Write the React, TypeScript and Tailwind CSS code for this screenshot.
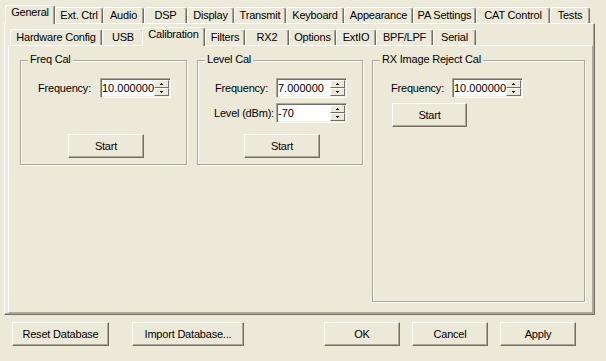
import React from 'react';

type TabDef = { label: string; cls: string; sel?: boolean };

const row1: TabDef[] = [
  { label: 'General', cls: 'w-[50px]', sel: true },
  { label: 'Ext. Ctrl', cls: 'w-[48px]' },
  { label: 'Audio', cls: 'w-[41px]' },
  { label: 'DSP', cls: 'w-[43px]' },
  { label: 'Display', cls: 'w-[47px]' },
  { label: 'Transmit', cls: 'w-[52px]' },
  { label: 'Keyboard', cls: 'w-[58px]' },
  { label: 'Appearance', cls: 'w-[69px]' },
  { label: 'PA Settings', cls: 'w-[63px]' },
  { label: 'CAT Control', cls: 'w-[74px]' },
  { label: 'Tests', cls: 'w-[40px]' },
];

const row2: TabDef[] = [
  { label: 'Hardware Config', cls: 'w-[92px]' },
  { label: 'USB', cls: 'w-[42px]' },
  { label: 'Calibration', cls: 'w-[63px]', sel: true },
  { label: 'Filters', cls: 'w-[40px]' },
  { label: 'RX2', cls: 'w-[44px]' },
  { label: 'Options', cls: 'w-[47px]' },
  { label: 'ExtIO', cls: 'w-[40px]' },
  { label: 'BPF/LPF', cls: 'w-[57px]' },
  { label: 'Serial', cls: 'w-[43px]' },
];

function Tab({ t }: { t: TabDef }) {
  if (t.sel) {
    return (
      <div
        className={`relative z-10 -ml-[2px] -mb-px flex h-[19px] shrink-0 justify-center whitespace-nowrap rounded-t-[3px] border-l border-r border-t border-l-white border-t-white border-r-[#716F64] bg-[#ECE9D8] shadow-[inset_-1px_0_0_#ACA899] ${t.cls}`}
      >
        {t.label}
      </div>
    );
  }
  return (
    <div
      className={`flex h-[16px] shrink-0 justify-center whitespace-nowrap rounded-t-[3px] border-l border-r border-t border-l-white border-t-white border-r-[#716F64] pt-[1px] shadow-[inset_-1px_0_0_#ACA899] ${t.cls}`}
    >
      {t.label}
    </div>
  );
}

function Arrow({ up }: { up?: boolean }) {
  return (
    <svg width="3" height="2" viewBox="0 0 3 2" className="block">
      {up ? (
        <>
          <rect x="1" y="0" width="1" height="1" fill="#000" />
          <rect x="0" y="1" width="3" height="1" fill="#000" />
        </>
      ) : (
        <>
          <rect x="0" y="0" width="3" height="1" fill="#000" />
          <rect x="1" y="1" width="1" height="1" fill="#000" />
        </>
      )}
    </svg>
  );
}

function SpinBtn({ up }: { up?: boolean }) {
  return (
    <div className="flex h-[8px] items-center justify-center border border-t-white border-l-white border-r-[#716F64] border-b-[#716F64] bg-[#ECE9D8]">
      <Arrow up={up} />
    </div>
  );
}

function Spin({ value, cls }: { value: string; cls: string }) {
  return (
    <div
      className={`flex h-[20px] shrink-0 border border-t-[#ACA899] border-l-[#ACA899] border-r-white border-b-white bg-white p-[1px] shadow-[inset_1px_1px_0_#716F64,inset_-1px_-1px_0_#F1EFE2] ${cls}`}
    >
      <div className="flex-1 overflow-hidden whitespace-nowrap leading-[16px] tracking-normal">{value}</div>
      <div className="flex w-[15px] flex-col">
        <SpinBtn up />
        <SpinBtn />
      </div>
    </div>
  );
}

function Btn({ label, cls }: { label: string; cls: string }) {
  return (
    <button
      type="button"
      className={`flex shrink-0 items-center justify-center whitespace-nowrap border border-t-white border-l-white border-r-[#716F64] border-b-[#716F64] bg-[#ECE9D8] leading-[13px] shadow-[inset_-1px_-1px_0_#ACA899] ${cls}`}
    >
      {label}
    </button>
  );
}

function Group({ title, cls, children }: { title: string; cls: string; children: React.ReactNode }) {
  return (
    <div className={`relative shrink-0 border border-[#ACA899] shadow-[inset_1px_1px_0_#fff,1px_1px_0_#fff] ${cls}`}>
      <span className="absolute left-[7px] top-[-8px] whitespace-nowrap bg-[#ECE9D8] px-[2px] leading-[13px]">
        {title}
      </span>
      {children}
    </div>
  );
}

export default function App() {
  return (
    <div className="h-[361px] w-[606px] overflow-hidden bg-[#ECE9D8] font-['Liberation_Sans',Arial,sans-serif] text-[11px] leading-[13px] tracking-[-0.2px] text-black">
      <div className="ml-[4px] mt-[5px] flex w-[591px] flex-col">
        <div className="flex h-[18px] items-end pl-[3px]">
          {row1.map((t) => (
            <Tab key={t.label} t={t} />
          ))}
        </div>
        <div className="flex h-[292px] flex-col border border-l-white border-t-white border-r-[#716F64] border-b-[#716F64] pb-[1px] pl-[3px] pr-[1px] pt-[3px] shadow-[inset_-1px_-1px_0_#ACA899]">
          <div className="flex h-[18px] items-end pl-[2px]">
            {row2.map((t) => (
              <Tab key={t.label} t={t} />
            ))}
          </div>
          <div className="flex flex-1 items-start gap-[10px] border border-l-white border-t-white border-r-[#ACA899] border-b-[#ACA899] pl-[11px] pt-[14px]">
            <Group title="Freq Cal" cls="h-[105px] w-[167px]">
              <div className="flex items-center pl-[17px] pt-[17px]">
                <span className="w-[62px] whitespace-nowrap">Frequency:</span>
                <Spin value="10.000000" cls="w-[71px]" />
              </div>
              <Btn label="Start" cls="ml-[47px] mt-[36px] h-[24px] w-[76px]" />
            </Group>
            <Group title="Level Cal" cls="h-[105px] w-[166px]">
              <div className="flex flex-col gap-[5px] pt-[17px]">
                <div className="flex items-center pl-[17px]">
                  <span className="w-[61px] whitespace-nowrap">Frequency:</span>
                  <Spin value="7.000000" cls="w-[71px]" />
                </div>
                <div className="flex items-center pl-[16px]">
                  <span className="w-[62px] whitespace-nowrap">Level (dBm):</span>
                  <Spin value="-70" cls="w-[71px]" />
                </div>
              </div>
              <Btn label="Start" cls="ml-[46px] mt-[11px] h-[24px] w-[76px]" />
            </Group>
            <div className="ml-[-1px]">
              <Group title="RX Image Reject Cal" cls="h-[242px] w-[213px]">
                <div className="flex items-center pl-[18px] pt-[17px]">
                  <span className="w-[61px] whitespace-nowrap">Frequency:</span>
                  <Spin value="10.000000" cls="w-[71px]" />
                </div>
                <Btn label="Start" cls="ml-[19px] mt-[5px] h-[24px] w-[75px]" />
              </Group>
            </div>
          </div>
        </div>
      </div>
      <div className="mt-[7px] flex pl-[12px] pr-[30px]">
        <div className="flex gap-[23px]">
          <Btn label="Reset Database" cls="h-[24px] w-[97px]" />
          <Btn label="Import Database..." cls="h-[24px] w-[112px]" />
        </div>
        <div className="ml-auto flex gap-[12px]">
          <Btn label="OK" cls="h-[24px] w-[76px]" />
          <Btn label="Cancel" cls="h-[24px] w-[76px]" />
          <Btn label="Apply" cls="h-[24px] w-[76px]" />
        </div>
      </div>
    </div>
  );
}
